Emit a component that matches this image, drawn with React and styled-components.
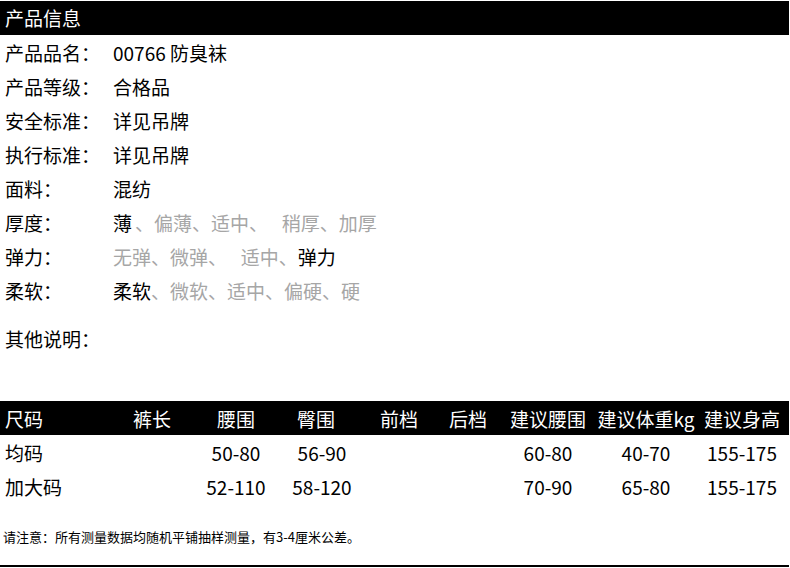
import React from "react";
import styled, { createGlobalStyle } from "styled-components";

const Global = createGlobalStyle`
  html, body { margin: 0; padding: 0; background: #fff; }
  body {
    overflow: hidden;
    font-family: "Noto Sans CJK SC", "Noto Sans", sans-serif;
    color: #000;
  }
`;

const Page = styled.div`
  width: 790px;
  padding-top: 1px;
  display: flex;
  flex-direction: column;
`;

const TitleBar = styled.div`
  height: 34px;
  width: 789px;
  background: #000;
  color: #fff;
  font-size: 19px;
  line-height: 34px;
  padding-left: 5px;
  box-sizing: border-box;
`;

const InfoRow = styled.div`
  display: grid;
  grid-template-columns: 108px 1fr;
  height: 34px;
  align-items: center;
  padding-left: 5px;
  font-size: 19px;
  margin-top: ${(p) => p.$gap || 0}px;
  white-space: pre;
`;

const Label = styled.span``;
const Value = styled.span``;

const Opt = styled.span`
  color: ${(p) => (p.$on ? "#000" : "#a6a6a6")};
  margin-right: ${(p) => p.$after || 0}px;
`;

const TableRow = styled.div`
  display: grid;
  grid-template-columns: 110px 84px 84px 76px 90px 48px 112px 84px 108px;
  height: 34px;
  width: 789px;
  align-items: center;
  font-size: 19px;
  background: ${(p) => (p.$head ? "#000" : "transparent")};
  color: ${(p) => (p.$head ? "#fff" : "#000")};
  margin-top: ${(p) => p.$gap || 0}px;
`;

const FirstCell = styled.div`
  padding-left: 5px;
  white-space: nowrap;
`;

const Cell = styled.div`
  display: flex;
  justify-content: center;
  white-space: nowrap;
  transform: translateX(${(p) => p.$shift || 0}px);
`;

const Note = styled.div`
  height: 34px;
  margin-top: 16px;
  display: flex;
  align-items: center;
  padding-left: 3px;
  font-size: 13px;
`;

const BottomLine = styled.div`
  margin-top: 12px;
  width: 789px;
  height: 2px;
  background: #000;
`;

const headers = ["尺码", "裤长", "腰围", "臀围", "前档", "后档", "建议腰围", "建议体重kg", "建议身高"];
const rows = [
  ["均码", "", "50-80", "56-90", "", "", "60-80", "40-70", "155-175"],
  ["加大码", "", "52-110", "58-120", "", "", "70-90", "65-80", "155-175"],
];

export default function App() {
  return (
    <>
      <Global />
      <Page>
        <TitleBar>产品信息</TitleBar>
        <InfoRow>
          <Label>产品品名：</Label>
          <Value>00766 防臭袜</Value>
        </InfoRow>
        <InfoRow>
          <Label>产品等级：</Label>
          <Value>合格品</Value>
        </InfoRow>
        <InfoRow>
          <Label>安全标准：</Label>
          <Value>详见吊牌</Value>
        </InfoRow>
        <InfoRow>
          <Label>执行标准：</Label>
          <Value>详见吊牌</Value>
        </InfoRow>
        <InfoRow>
          <Label>面料：</Label>
          <Value>混纺</Value>
        </InfoRow>
        <InfoRow>
          <Label>厚度：</Label>
          <Value>
            <Opt $on $after={3}>薄</Opt>
            <Opt>{"、偏薄、适中、\u2002 稍厚、加厚"}</Opt>
          </Value>
        </InfoRow>
        <InfoRow>
          <Label>弹力：</Label>
          <Value>
            <Opt>{"无弹、微弹、\u2002 适中、"}</Opt>
            <Opt $on>弹力</Opt>
          </Value>
        </InfoRow>
        <InfoRow>
          <Label>柔软：</Label>
          <Value>
            <Opt $on>柔软</Opt>
            <Opt>、微软、适中、偏硬、硬</Opt>
          </Value>
        </InfoRow>
        <InfoRow $gap={14}>
          <Label>其他说明：</Label>
          <Value />
        </InfoRow>
        <TableRow $head $gap={46}>
          {headers.map((h, i) =>
            i === 0 ? <FirstCell key={i}>{h}</FirstCell> : <Cell key={i}>{h}</Cell>
          )}
        </TableRow>
        {rows.map((r, ri) => (
          <TableRow key={ri}>
            {r.map((c, i) =>
              i === 0 ? (
                <FirstCell key={i}>{c}</FirstCell>
              ) : (
                <Cell key={i} $shift={i === 3 ? 6 : 0}>
                  {c}
                </Cell>
              )
            )}
          </TableRow>
        ))}
        <Note>请注意：所有测量数据均随机平铺抽样测量，有3-4厘米公差。</Note>
        <BottomLine />
      </Page>
    </>
  );
}
